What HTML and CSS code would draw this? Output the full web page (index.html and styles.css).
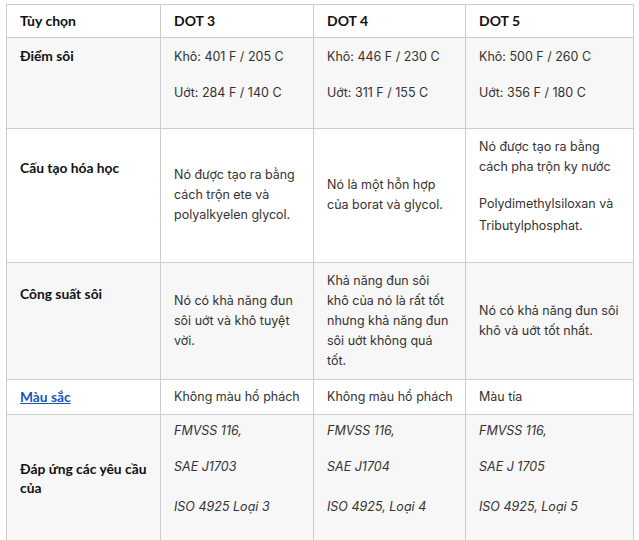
FILE: index.html
```html
<!DOCTYPE html>
<html lang="vi">
<head>
<meta charset="utf-8">
<title>DOT 3, DOT 4, DOT 5</title>
<link rel="stylesheet" href="styles.css">
</head>
<body>
<table class="spec">
  <colgroup>
    <col class="c1"><col class="c2"><col class="c3"><col class="c4">
  </colgroup>
  <thead>
    <tr class="head">
      <th>Tùy chọn</th>
      <th>DOT 3</th>
      <th>DOT 4</th>
      <th>DOT 5</th>
    </tr>
  </thead>
  <tbody>
    <tr class="alt">
      <th class="lbl tall"><p>Điểm sôi</p></th>
      <td><p>Khô: 401 F / 205 C</p><p>Uớt: 284 F / 140 C</p></td>
      <td><p>Khô: 446 F / 230 C</p><p>Uớt: 311 F / 155 C</p></td>
      <td><p>Khô: 500 F / 260 C</p><p>Uớt: 356 F / 180 C</p></td>
    </tr>
    <tr>
      <th class="lbl tall"><p>Cấu tạo hóa học</p></th>
      <td>Nó được tạo ra bằng<br>cách trộn ete và<br>polyalkyelen glycol.</td>
      <td class="low">Nó là một hỗn hợp<br>của borat và glycol.</td>
      <td><p>Nó được tạo ra bằng<br>cách pha trộn ky nước</p><p class="loose">Polydimethylsiloxan và<br>Tributylphosphat.</p></td>
    </tr>
    <tr class="alt">
      <th class="lbl tall"><p>Công suất sôi</p></th>
      <td>Nó có khả năng đun<br>sôi uớt và khô tuyệt<br>vời.</td>
      <td>Khả năng đun sôi<br>khô của nó là rất tốt<br>nhưng khả năng đun<br>sôi uớt không quá<br>tốt.</td>
      <td>Nó có khả năng đun sôi<br>khô và uớt tốt nhất.</td>
    </tr>
    <tr class="short">
      <th class="lbl"><a href="#mau-sac">Màu sắc</a></th>
      <td>Không màu hổ phách</td>
      <td>Không màu hổ phách</td>
      <td>Màu tía</td>
    </tr>
    <tr class="alt std">
      <th class="lbl"><p>Đáp ứng các yêu cầu<br>của</p></th>
      <td><p><em>FMVSS 116,</em></p><p class="wide"><em>SAE J1703</em></p><p class="end"><em>ISO 4925 Loại 3</em></p></td>
      <td><p><em>FMVSS 116,</em></p><p class="wide"><em>SAE J1704</em></p><p class="end"><em>ISO 4925, Loại 4</em></p></td>
      <td><p><em>FMVSS 116,</em></p><p class="wide"><em>SAE J 1705</em></p><p class="end"><em>ISO 4925, Loại 5</em></p></td>
    </tr>
  </tbody>
</table>
</body>
</html>
```
FILE: styles.css
```css
html, body {
  margin: 0;
  padding: 0;
  background: #ffffff;
}

.spec {
  margin: 4px 0 0 6px;
  width: 627px;
  table-layout: fixed;
  border-collapse: collapse;
  font-family: "Inter", "Liberation Sans", sans-serif;
  font-size: 12.5px;
  line-height: 20px;
  color: #333333;
}

.c1 { width: 154px; }
.c2 { width: 153px; }
.c3 { width: 152px; }
.c4 { width: 168px; }

.spec th,
.spec td {
  border: 1px solid #cccccc;
  padding: 8px 13px;
  text-align: left;
  vertical-align: middle;
  white-space: nowrap;
}

.spec p {
  margin: 0 0 16px;
}

.head th {
  font-family: "Lato", "Liberation Sans", sans-serif;
  font-weight: 700;
  font-size: 14px;
  line-height: 16px;
  color: #111111;
}

.alt th,
.alt td {
  background: #f7f7f7;
}

.lbl {
  font-family: "Lato", "Liberation Sans", sans-serif;
  font-weight: 700;
  font-size: 13.8px;
  line-height: 19px;
  color: #111111;
}

.lbl.tall p {
  margin-bottom: 55px;
}

.lbl a {
  color: #1a56b4;
  text-decoration: underline;
}

.low {
  padding-top: 12px;
}

.loose {
  line-height: 22.4px;
}

.short th,
.short td {
  padding-top: 7px;
  padding-bottom: 7px;
}

.std td {
  vertical-align: top;
  padding-top: 6px;
}

.std td p.wide {
  margin-bottom: 20px;
}

.std td p.end {
  margin-bottom: 33px;
}

.spec em {
  font-style: italic;
}
```
